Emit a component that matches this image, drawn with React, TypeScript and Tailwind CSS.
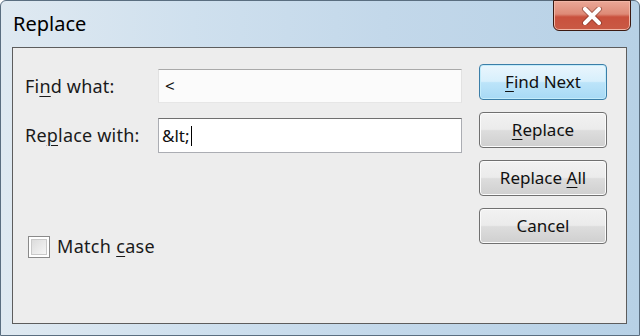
const font = { fontFamily: '"Noto Sans", "Open Sans", sans-serif' };

const Key = ({ children }: { children: string }) => (
  <span className="underline underline-offset-[3px] decoration-1">{children}</span>
);

const Button = ({
  children,
  primary,
}: {
  children: React.ReactNode;
  primary?: boolean;
}) => (
  <button
    className={`h-[36px] w-[128px] rounded-[4px] border text-[17px] text-[#111] flex items-center justify-center ${
      primary
        ? "border-[#3b7ea8] bg-[linear-gradient(#eaf6fd_0%,#d7effc_48%,#bce4f9_52%,#a7d9f5_100%)] shadow-[inset_0_0_0_1px_#c3ecfb]"
        : "border-[#707070] bg-[linear-gradient(#f2f2f2_0%,#ebebeb_48%,#dddddd_52%,#cfcfcf_100%)] shadow-[inset_0_0_0_1px_#fbfbfb]"
    }`}
  >
    <span>{children}</span>
  </button>
);

export default function App() {
  return (
    <div
      className="w-[640px] h-[336px] flex flex-col bg-[linear-gradient(90deg,#dfe9f1_0%,#cfe0ee_30%,#c3d8ea_60%,#b7d1e6_100%)] border border-[#5a6e80] rounded-t-[6px]"
      style={font}
    >
      {/* title bar */}
      <div className="h-[46px] flex items-start">
        <span className="pl-[12px] pt-[8px] text-[20px] text-black">Replace</span>
        <div className="ml-auto mr-[8px] mt-[-1px] w-[78px] h-[31px] rounded-b-[6px] border border-[#3c1a12] bg-[linear-gradient(#eba897_0%,#de8a77_45%,#c9513d_55%,#c95a45_100%)] shadow-[inset_0_0_0_1px_#f1b6a6] flex items-center justify-center">
          <svg width="22" height="18" viewBox="0 0 22 18">
            <path
              d="M4 2 L18 16 M18 2 L4 16"
              stroke="#6b2a1e"
              strokeWidth="6"
              strokeLinecap="round"
              opacity="0.5"
            />
            <path
              d="M4 2 L18 16 M18 2 L4 16"
              stroke="#ffffff"
              strokeWidth="4"
              strokeLinecap="round"
            />
          </svg>
        </div>
      </div>

      {/* client area */}
      <div className="ml-[11px] mr-[12px] h-[277px] border border-[#5d5d5d] bg-[#ededed] flex">
        <div className="flex-1 flex flex-col pl-[12px] pt-[21px]">
          <div className="flex items-center h-[34px]">
            <span className="w-[133px] text-[18px] tracking-[0.2px] text-[#1a1a1a]">
              Fi<Key>n</Key>d what:
            </span>
            <div className="w-[304px] h-[34px] bg-[#fbfbfb] border-t border-t-[#a9a9a9] border-x border-x-[#e2e2e2] border-b border-b-[#e6e6e6] flex items-center pl-[6px] text-[17px] text-[#111]">
              &lt;
            </div>
          </div>
          <div className="flex items-center h-[35px] mt-[15px]">
            <span className="w-[133px] text-[18px] tracking-[0.2px] text-[#1a1a1a]">
              Re<Key>p</Key>lace with:
            </span>
            <div className="w-[304px] h-[35px] bg-white border border-[#abadb3] border-t-[#6f6f6f] flex items-center pl-[3px] text-[17px] text-[#111]">
              <span>&amp;lt;</span>
              <span className="inline-block w-[1px] h-[20px] bg-black ml-[1px]" />
            </div>
          </div>
          <label className="flex items-center mt-[80px] ml-[3px] gap-[7px] text-[18px] tracking-[0.3px] text-[#1a1a1a]">
            <span className="w-[22px] h-[22px] border border-[#8a8a8a] bg-white flex items-center justify-center">
              <span className="w-[16px] h-[16px] border border-[#c9c9c9] bg-[linear-gradient(135deg,#dcdcdc,#f6f6f6)]" />
            </span>
            <span>
              Match <Key>c</Key>ase
            </span>
          </label>
        </div>
        <div className="flex flex-col gap-[12px] pt-[16px] pr-[19px]">
          <Button primary>
            <Key>F</Key>ind Next
          </Button>
          <Button>
            <Key>R</Key>eplace
          </Button>
          <Button>
            Replace <Key>A</Key>ll
          </Button>
          <Button>Cancel</Button>
        </div>
      </div>
    </div>
  );
}
